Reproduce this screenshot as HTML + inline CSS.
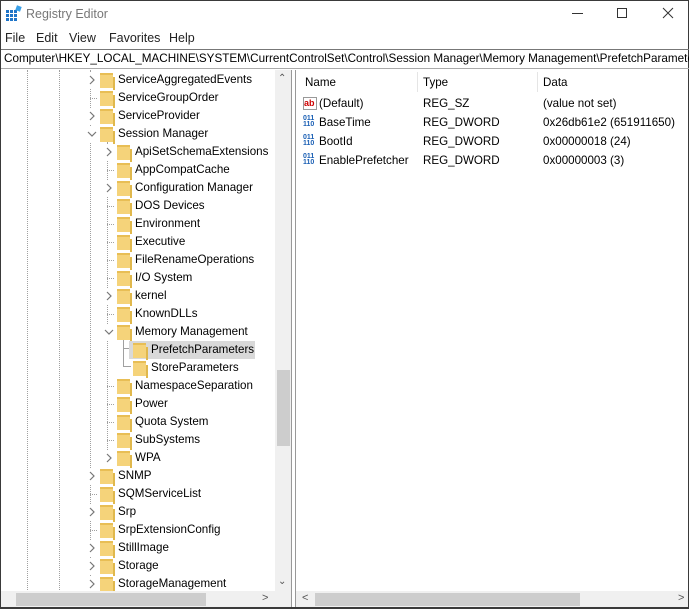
<!DOCTYPE html>
<html><head><style>
*{margin:0;padding:0;box-sizing:border-box}
body{width:689px;height:609px;overflow:hidden;background:#fff;font-family:"Liberation Sans",sans-serif;font-size:11.6px;color:#000;position:relative}
.a{position:absolute;white-space:nowrap}
.f{position:absolute;width:13px;height:15px;background:#f5d37a;border-top:2px solid #e8be55}
.f:after{content:"";position:absolute;right:-2px;top:2px;width:2px;height:13px;background:#e0b84c}
.dv{position:absolute;border-left:1px dotted #a0a0a0;width:0}
.dh{position:absolute;border-top:1px dotted #a0a0a0;height:0}
</style></head><body>
<div class="a" style="left:0;top:0;width:689px;height:609px;border:1px solid #3a3a3a"></div>
<svg class="a" style="left:5px;top:5px" width="17" height="17" viewBox="0 0 17 17">
<rect x="1" y="5" width="11" height="11" fill="#1e74c8"/>
<g stroke="#fff" stroke-width="1"><line x1="1" y1="8.5" x2="12" y2="8.5"/><line x1="1" y1="12.5" x2="12" y2="12.5"/><line x1="4.5" y1="5" x2="4.5" y2="16"/><line x1="8.5" y1="5" x2="8.5" y2="16"/></g>
<rect x="11" y="1" width="5" height="5" fill="#3aa0e8" transform="rotate(20 13.5 3.5)"/>
</svg>
<div class="a" style="left:26px;top:7px;font-size:12.5px;color:#777">Registry Editor</div>
<div class="a" style="left:572px;top:13px;width:11px;height:1px;background:#333"></div>
<div class="a" style="left:617px;top:8px;width:10px;height:10px;border:1px solid #333"></div>
<svg class="a" style="left:662px;top:7px" width="12" height="12"><path d="M1 1L11 11M11 1L1 11" stroke="#333" stroke-width="1"/></svg>
<div class="a" style="left:5px;top:31px;font-size:12.5px;color:#222">File</div>
<div class="a" style="left:36px;top:31px;font-size:12.5px;color:#222">Edit</div>
<div class="a" style="left:69px;top:31px;font-size:12.5px;color:#222">View</div>
<div class="a" style="left:109px;top:31px;font-size:12.5px;color:#222">Favorites</div>
<div class="a" style="left:169px;top:31px;font-size:12.5px;color:#222">Help</div>
<div class="a" style="left:1px;top:49px;width:688px;height:20px;border-top:1px solid #777;border-bottom:1px solid #aaa;overflow:hidden">
<div class="a" style="left:3px;top:2px;font-size:11.7px">Computer\HKEY_LOCAL_MACHINE\SYSTEM\CurrentControlSet\Control\Session Manager\Memory Management\PrefetchParameters</div></div>
<div class="a" id="tree" style="left:1px;top:70px;width:290px;height:537px;overflow:hidden">
<div class="dv" style="left:26px;top:0;height:522px"></div>
<div class="dv" style="left:58px;top:0;height:522px"></div>
<div class="dv" style="left:89px;top:0;height:522px"></div>
<div class="dv" style="left:106px;top:72px;height:310px"></div>
<div class="dv" style="left:122px;top:270px;height:26px;border-left:1px solid #a0a0a0"></div>
<div class="dh" style="left:122px;top:278px;width:8px;border-top:1px solid #a0a0a0"></div>
<div class="dh" style="left:122px;top:296px;width:8px;border-top:1px solid #a0a0a0"></div>
</div>
<div class="a" style="left:275px;top:70px;width:16px;height:521px;background:#f0f0f0"></div>
<div class="a" style="left:277px;top:370px;width:13px;height:76px;background:#cdcdcd"></div>
<div class="a" style="left:278px;top:73px;color:#555;font-size:10px">&#8963;</div>
<div class="a" style="left:278px;top:576px;color:#555;font-size:10px">&#8964;</div>
<div class="a" style="left:1px;top:591px;width:290px;height:16px;background:#f0f0f0"></div>
<div class="a" style="left:16px;top:593px;width:190px;height:13px;background:#cdcdcd"></div>
<div class="a" style="left:262px;top:592px;color:#555;font-size:11px">&gt;</div>
<div class="a" style="left:291px;top:70px;width:1px;height:537px;background:#999"></div>
<div class="a" style="left:295px;top:70px;width:1px;height:537px;background:#999"></div>
<div class="a" style="left:305px;top:76px">Name</div>
<div class="a" style="left:423px;top:76px">Type</div>
<div class="a" style="left:543px;top:76px">Data</div>
<div class="a" style="left:417px;top:72px;width:1px;height:20px;background:#e5e5e5"></div>
<div class="a" style="left:537px;top:72px;width:1px;height:20px;background:#e5e5e5"></div>
<div class="a" style="left:303px;top:97px;width:14px;height:13px;border:1px solid #999;font-size:9px;color:#c00;line-height:10px;font-weight:bold">ab</div>
<div class="a" style="left:319px;top:97px">(Default)</div><div class="a" style="left:423px;top:97px">REG_SZ</div><div class="a" style="left:543px;top:97px">(value not set)</div>
<div class="a" style="left:303px;top:116px;width:13px;height:13px;font-size:7px;line-height:6px;color:#1a5fb4;font-weight:bold">011<br>110</div>
<div class="a" style="left:319px;top:116px">BaseTime</div><div class="a" style="left:423px;top:116px">REG_DWORD</div><div class="a" style="left:543px;top:116px">0x26db61e2 (651911650)</div>
<div class="a" style="left:303px;top:135px;width:13px;height:13px;font-size:7px;line-height:6px;color:#1a5fb4;font-weight:bold">011<br>110</div>
<div class="a" style="left:319px;top:135px">BootId</div><div class="a" style="left:423px;top:135px">REG_DWORD</div><div class="a" style="left:543px;top:135px">0x00000018 (24)</div>
<div class="a" style="left:303px;top:154px;width:13px;height:13px;font-size:7px;line-height:6px;color:#1a5fb4;font-weight:bold">011<br>110</div>
<div class="a" style="left:319px;top:154px">EnablePrefetcher</div><div class="a" style="left:423px;top:154px">REG_DWORD</div><div class="a" style="left:543px;top:154px">0x00000003 (3)</div>
<div class="a" style="left:296px;top:591px;width:392px;height:16px;background:#f0f0f0"></div>
<div class="a" style="left:315px;top:593px;width:265px;height:13px;background:#cdcdcd"></div>
<div class="a" style="left:302px;top:592px;color:#555;font-size:11px">&lt;</div>
<div class="a" style="left:678px;top:592px;color:#555;font-size:11px">&gt;</div>
<div class="a" style="left:1px;top:607px;width:688px;height:2px;background:#3a3a3a"></div>
<script>
var rows=[["ServiceAggregatedEvents",0,">"],["ServiceGroupOrder",0,""],["ServiceProvider",0,">"],["Session Manager",0,"v"],["ApiSetSchemaExtensions",1,">"],["AppCompatCache",1,""],["Configuration Manager",1,">"],["DOS Devices",1,""],["Environment",1,""],["Executive",1,""],["FileRenameOperations",1,""],["I/O System",1,""],["kernel",1,">"],["KnownDLLs",1,""],["Memory Management",1,"v"],["PrefetchParameters",2,"s"],["StoreParameters",2,""],["NamespaceSeparation",1,""],["Power",1,""],["Quota System",1,""],["SubSystems",1,""],["WPA",1,">"],["SNMP",0,">"],["SQMServiceList",0,""],["Srp",0,">"],["SrpExtensionConfig",0,""],["StillImage",0,">"],["Storage",0,">"],["StorageManagement",0,">"]];
var t=document.getElementById("tree"),h="";
rows.forEach(function(r,i){var y=i*18+1,fx=[99,116,132][r[1]],tx=fx+18;
if(r[2]=="s")h+='<div class="a" style="left:'+(fx-4)+'px;top:'+y+'px;width:126px;height:18px;background:#d9d9d9"></div>';
if(r[2]==">"||r[2]=="v")h+='<div class="a" style="left:'+(fx-12)+'px;top:'+(y+1)+'px;width:12px;height:16px;background:#fff"></div><svg class="a" style="left:'+(fx-13)+'px;top:'+(y+4)+'px" width="10" height="10"><path d="'+(r[2]==">"?"M3 1L7 5L3 9":"M1 3L5 7L9 3")+'" fill="none" stroke="#777" stroke-width="1.2"/></svg>';
else if(r[1]<2)h+='<div class="dh" style="left:'+(fx-10)+'px;top:'+(y+9)+'px;width:7px"></div>';
h+='<div class="f" style="left:'+fx+'px;top:'+(y+2)+'px"></div><div class="a" style="left:'+tx+'px;top:'+(y+2)+'px;font-size:11.6px">'+r[0]+'</div>';});
t.innerHTML+=h;
</script>
</body></html>
